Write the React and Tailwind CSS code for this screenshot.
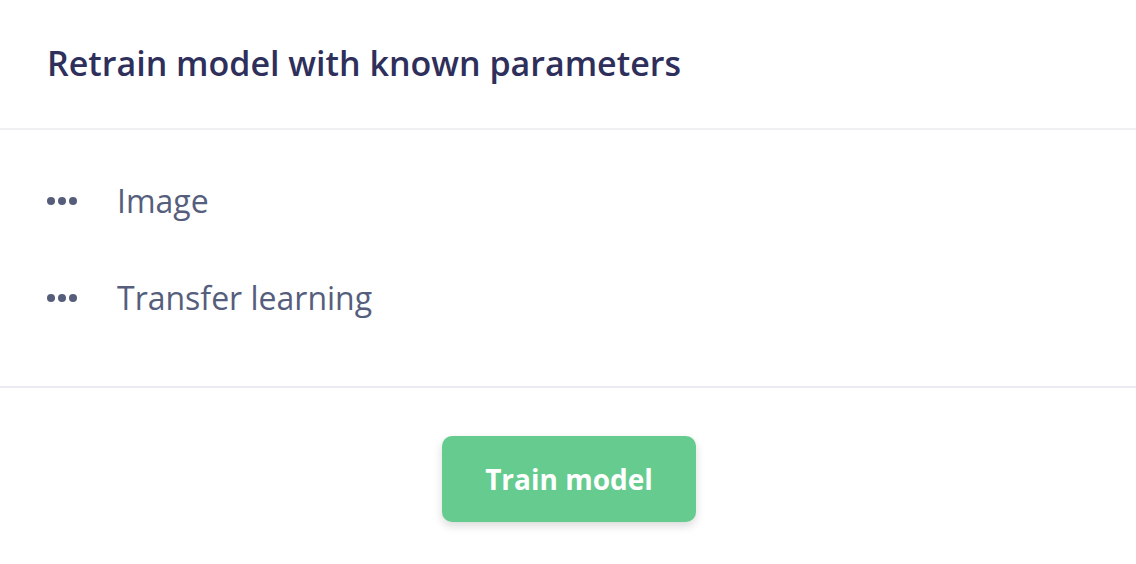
import { useState } from 'react'

const items = ['Image', 'Transfer learning']

const Dots = () => (
  <div className="flex items-center gap-[3px] w-[31px]">
    <span className="w-2 h-2 rounded-full bg-[#555d7b]" />
    <span className="w-2 h-2 rounded-full bg-[#555d7b]" />
    <span className="w-2 h-2 rounded-full bg-[#555d7b]" />
  </div>
)

const App = () => {
  const [training, setTraining] = useState(false)

  return (
    <div
      className="w-[1136px] h-[564px] bg-white flex flex-col"
      style={{ fontFamily: '"Open Sans", "Liberation Sans", sans-serif' }}
    >
      {/* Header */}
      <div className="h-[130px] flex items-center px-[47px] border-b-2 border-[#f0f0f2] shrink-0">
        <h2 className="text-[34px] font-semibold text-[#2e2f5b] leading-none -mt-[2px]">
          Retrain model with known parameters
        </h2>
      </div>

      {/* Parameters */}
      <div className="h-[258px] pt-[51px] px-[47px] border-b-2 border-[#ebeaf2] shrink-0">
        <ul className="flex flex-col gap-[57px]">
          {items.map((item) => (
            <li key={item} className="flex items-center h-[40px]">
              <Dots />
              <span className="ml-[39px] text-[32px] text-[#555e7c] leading-none">{item}</span>
            </li>
          ))}
        </ul>
      </div>

      {/* Footer */}
      <div className="flex justify-center pt-[48px] pl-[2px]">
        <button
          onClick={() => setTraining(!training)}
          className="w-[254px] h-[86px] rounded-[10px] bg-[#66cb8f] text-white text-[28px] font-bold shadow-[0_4px_10px_rgba(0,0,0,0.15)]"
        >
          Train model
        </button>
      </div>
    </div>
  )
}

export default App
